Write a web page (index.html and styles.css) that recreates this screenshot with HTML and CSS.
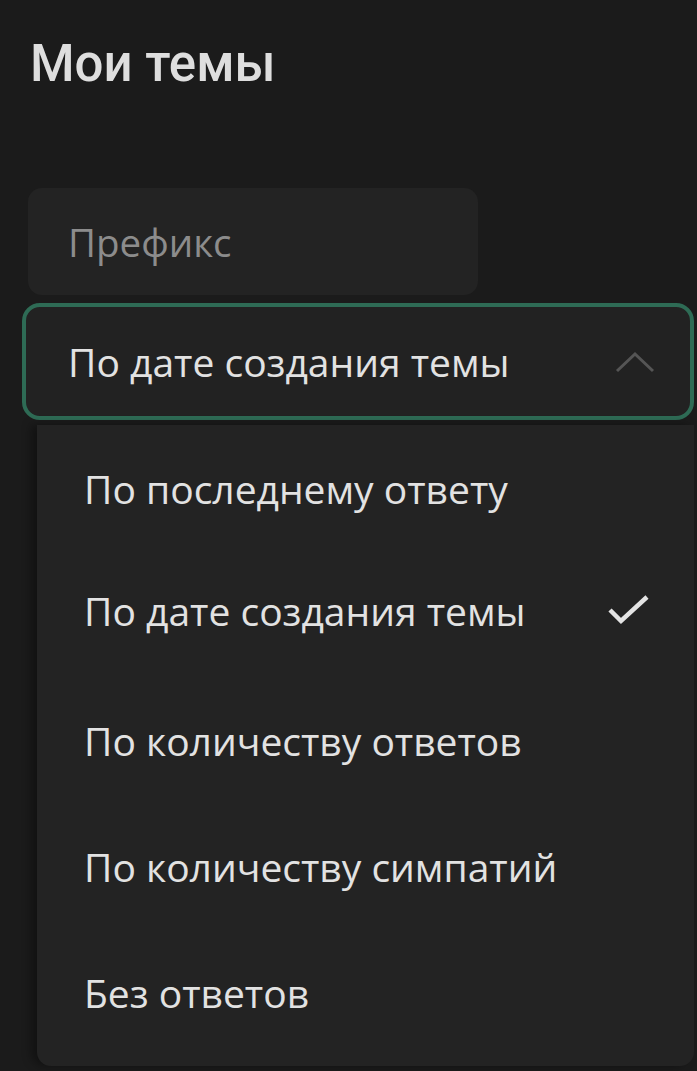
FILE: index.html
```html
<!DOCTYPE html>
<html lang="ru">
<head>
  <meta charset="UTF-8">
  <meta name="viewport" content="width=device-width,initial-scale=1">
  <title>Мои темы</title>
  <link rel="stylesheet" href="styles.css">
</head>
<body>
  <div class="page">
    <h1 class="title">Мои темы</h1>

    <!-- фильтр по префиксу -->
    <div class="prefix">Префикс</div>

    <!-- сортировка (открыта) -->
    <div class="select">
      <span>По дате создания темы</span>
      <svg class="chevron" width="40" height="22" viewBox="0 0 40 22">
        <polyline points="2,20 20,3 38,20" fill="none" stroke="#555" stroke-width="3"/>
      </svg>
    </div>

    <ul class="menu">
      <li>По последнему ответу</li>
      <li class="active">По дате создания темы
        <svg class="check" width="44" height="34" viewBox="0 0 44 34">
          <polyline points="3,17 14,28 40,4" fill="none" stroke="#e4e4e4" stroke-width="4.5"/>
        </svg>
      </li>
      <li>По количеству ответов</li>
      <li>По количеству симпатий</li>
      <li>Без ответов</li>
    </ul>
  </div>
</body>
</html>
```

FILE: styles.css
```css
/* ---- база ---- */
* { margin:0; padding:0; box-sizing:border-box; }
html, body {
  height: 100%;
  overflow: hidden;
  background: #1b1b1b;
  color: #e2e2e2;
  font-family: "Open Sans", "Noto Sans", sans-serif;
}

.page { display:flex; flex-direction:column; padding:0 3px 0 22px; }

/* ---- заголовок ---- */
.title {
  font-family: Roboto, "Liberation Sans", sans-serif;
  font-weight: 500;
  font-size: 51px;
  line-height: 1;
  color: #dedede;
  padding: 38px 0 0 8px;
  height: 188px;
}

/* ---- префикс ---- */
.prefix {
  width: 450px; height: 107px;
  margin-left: 6px;
  background: #232323;
  border-radius: 14px;
  display:flex; align-items:center;
  padding-left: 40px;
  font-size: 38.5px;
  color: #8c8c8c;
}

/* ---- селект ---- */
.select {
  margin-top: 8px;
  height: 117px;
  border: 4px solid #2e6b55;
  border-radius: 18px;
  background: #222;
  display:flex; align-items:center; justify-content:space-between;
  padding: 0 35px 0 42px;
  font-size: 39px;
}
.chevron { display:block; }

/* ---- выпадающее меню ---- */
.menu {
  list-style: none;
  margin: 5px 0 0 15px;
  padding: 0 0 11px;
  background: #232323;
  border-radius: 0 0 14px 14px;
  box-shadow: -6px 0 10px rgba(0,0,0,0.35);
}
.menu li {
  height: 126px;
  display:flex; align-items:center; justify-content:space-between;
  padding: 0 43px 0 47px;
  font-size: 39px;
}
.menu li.active { padding-bottom: 8px; }
.check { display:block; }
```
